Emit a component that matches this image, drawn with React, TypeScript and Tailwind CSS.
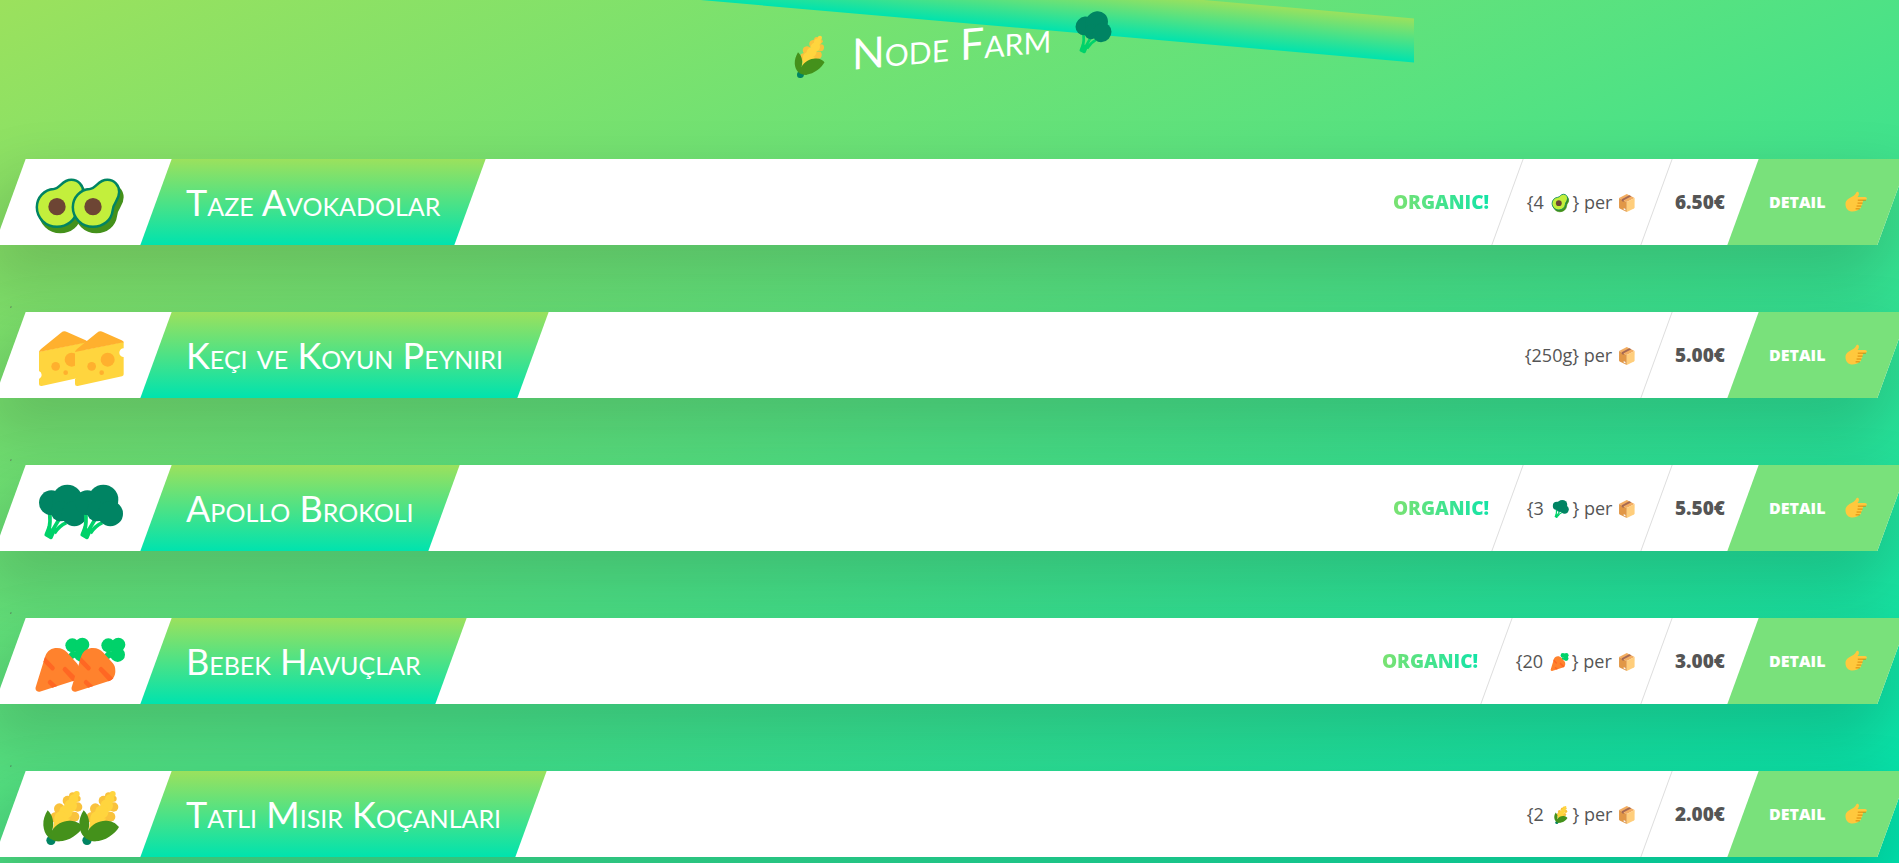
import type { ComponentType, ReactNode } from "react";

type IconProps = { className?: string };

function Drawing({ className, children }: IconProps & { children: ReactNode }) {
  return (
    <svg viewBox="0 0 180 180" className={className} fill="none" aria-hidden="true">
      {children}
    </svg>
  );
}

const AVOCADO =
  "M11.500 94C11.500 64 34 41 62 39C83 37 86 11.500 115 11.500C136 11.500 150.500 28 150.500 48C150.500 74 133 78 131 103C127 133 103 152.500 72 152.500C38 152.500 11.500 126 11.500 94Z";

function Avocado({ className }: IconProps) {
  return (
    <Drawing className={className}>
      <path d={AVOCADO} transform="translate(10 16)" fill="#44911b" stroke="#44911b" strokeWidth="7" />
      <path d={AVOCADO} fill="#c3ef3c" stroke="#008463" strokeWidth="7.500" />
      <circle cx="72" cy="92" r="26" fill="#6d4534" />
    </Drawing>
  );
}

function Cheese({ className }: IconProps) {
  return (
    <Drawing className={className}>
      <path
        d="M18 68L164 38V58A13 13 0 0 0 164 84V136Q164 141 159 142L26 171Q18 172 18 165V150A13 13 0 0 0 18 126Z"
        fill="#ffd53e"
      />
      <path d="M18 69Q19 64 24 60L84 11Q93 4 102 9L158 34Q164 37 164 40Z" fill="#ffb02e" />
      <circle cx="116" cy="92" r="21" fill="#ffb02e" />
      <circle cx="68" cy="112" r="13" fill="#ffb02e" />
      <circle cx="98" cy="131" r="7" fill="#ffb02e" />
    </Drawing>
  );
}

function Broccoli({ className }: IconProps) {
  return (
    <Drawing className={className}>
      <path
        d="M50 92Q53 120 48 142M77 114L58 146M100 122Q78 132 64 154"
        stroke="#00d26a"
        strokeWidth="11"
      />
      <path
        d="M44 132L68 148L59 168Q57 173 51 171L37 163Q32 160 35 155Z"
        fill="#00d26a"
      />
      <g fill="#008463">
        <circle cx="55" cy="62" r="37" />
        <circle cx="103" cy="53" r="45" />
        <circle cx="83" cy="88" r="30" />
        <circle cx="124" cy="95" r="38" />
      </g>
    </Drawing>
  );
}

function Carrot({ className }: IconProps) {
  return (
    <Drawing className={className}>
      <g fill="#00d26a">
        <circle cx="118" cy="31" r="21" />
        <circle cx="148" cy="29" r="21" />
        <circle cx="146" cy="59" r="22" />
        <path d="M118 45L100 66L112 76L140 60Z" />
      </g>
      <path
        d="M8 157L37 63C43 47 56 39 72 39C86 39 94 44 102 52L131 84C137 91 139 97 139 108C139 124 131 135 118 139L20 170C12 172 6 165 8 157Z"
        fill="#ff822d"
      />
      <path
        d="M36 66L64 95Q68 100 63 104Q59 109 54 104L31 81ZM91 98Q96 93 101 98L133 130Q128 136 119 139L91 108Q86 103 91 98ZM46 137Q51 132 56 137L73 153L58 158L46 146Q42 141 46 137Z"
        fill="#ff6723"
      />
    </Drawing>
  );
}

function Corn({ className }: IconProps) {
  return (
    <Drawing className={className}>
      <g fill="#f9c23c">
        <circle cx="119" cy="24" r="11" />
        <circle cx="134" cy="32" r="9" />
        <circle cx="104" cy="38" r="15" />
        <circle cx="134" cy="57" r="14" />
        <circle cx="79" cy="62" r="16" />
        <circle cx="124" cy="86" r="15" />
        <circle cx="68" cy="88" r="16" />
        <circle cx="104" cy="100" r="16" />
      </g>
      <g fill="#ffd53e">
        <circle cx="131" cy="18" r="9" />
        <circle cx="122" cy="33" r="14" />
        <circle cx="113" cy="53" r="19" />
        <circle cx="98" cy="72" r="20" />
        <circle cx="84" cy="90" r="20" />
        <path d="M66 82L112 92L100 105L58 134Z" />
      </g>
      <circle cx="54" cy="157" r="14" fill="#008463" />
      <g fill="#44911b">
        <path d="M44 67C36 80 30 95 31 112C33 140 50 160 80 160L58 127C64 105 60 82 44 67Z" />
        <path d="M57 128C70 105 98 95 118 99C134 101 142 108 150 117C138 138 108 160 78 160C60 160 50 150 50 138Z" />
      </g>
    </Drawing>
  );
}

function Package({ className }: IconProps) {
  return (
    <Drawing className={className}>
      <path d="M90 10L160 44L90 80L20 44Z" fill="#f3ad61" />
      <path d="M20 44L90 80V172L26 140Q20 136 20 130Z" fill="#e19747" />
      <path d="M160 44L90 80V172L154 140Q160 136 160 130Z" fill="#ffce7c" />
      <path d="M112 20L132 30L62 66V82L44 72V56Z" fill="#a56953" />
      <path d="M62 136L78 144V158L62 150Z" fill="#f4f4f4" />
    </Drawing>
  );
}

function PointingHand({ className }: IconProps) {
  return (
    <Drawing className={className}>
      <path
        d="M4 108C4 78 30 60 60 46C76 38 86 24 92 12C98 0 114 6 114 20C114 34 108 44 102 50H164C184 50 184 74 164 74H140C152 78 150 96 138 98C146 104 142 120 130 122C136 130 130 144 118 146C106 162 84 168 62 168C28 168 4 144 4 108Z"
        fill="#ffc83d"
      />
      <path
        d="M108 75H168M106 99H140M98 123H130M90 146H118"
        stroke="#d67d00"
        strokeWidth="7"
        strokeLinecap="round"
      />
    </Drawing>
  );
}

type Product = {
  name: string;
  Icon: ComponentType<IconProps>;
  organic: boolean;
  quantity: string;
  counted: boolean;
  price: string;
};

const products: Product[] = [
  { name: "Taze Avokadolar", Icon: Avocado, organic: true, quantity: "4", counted: true, price: "6.50" },
  { name: "Keçi ve Koyun Peyniri", Icon: Cheese, organic: false, quantity: "250g", counted: false, price: "5.00" },
  { name: "Apollo Brokoli", Icon: Broccoli, organic: true, quantity: "3", counted: true, price: "5.50" },
  { name: "Bebek Havuçlar", Icon: Carrot, organic: true, quantity: "20", counted: true, price: "3.00" },
  { name: "Tatlı Mısır Koçanları", Icon: Corn, organic: false, quantity: "2", counted: true, price: "2.00" },
];

function ProductCard({ product }: { product: Product }) {
  const { name, Icon, organic, quantity, counted, price } = product;
  return (
    <article className="flex h-[86px] skew-x-[-20deg] items-stretch bg-white shadow-[0_30px_60px_10px_rgba(0,0,0,0.15)]">
      <div className="flex w-[146px] shrink-0 items-center">
        <div className="flex skew-x-[20deg] pt-2 pl-[23px]">
          <Icon className="size-[60px]" />
          <Icon className="-ml-6 size-[60px]" />
        </div>
      </div>
      <div className="mr-auto flex items-center bg-linear-to-b/srgb from-[#9be15d] to-[#00e3ae] px-[30px]">
        <h2 className="skew-x-[20deg] font-['Lato'] text-[36px] leading-none font-normal whitespace-nowrap text-white [font-variant-caps:small-caps]">
          {name}
        </h2>
      </div>
      {organic && (
        <div className="flex items-center border-r border-[#ddd] px-[18px]">
          <p className="skew-x-[20deg] bg-linear-to-r/srgb from-[#7be271] to-[#12e4a7] bg-clip-text text-[19px] font-extrabold text-transparent">
            ORGANIC!
          </p>
        </div>
      )}
      <div className="flex items-center border-r border-[#ddd] px-[19px]">
        <p className="flex skew-x-[20deg] items-center text-[18px] whitespace-pre">
          <span>{counted ? `{${quantity} ` : `{${quantity}}`}</span>
          {counted && <Icon className="mx-[2px] size-[20px]" />}
          <span>{counted ? "} per " : " per "}</span>
          <Package className="size-[20px]" />
        </p>
      </div>
      <div className="flex items-center px-[18px]">
        <p className="skew-x-[20deg] text-[19px] font-extrabold">{price}€</p>
      </div>
      <a href="#detail" className="flex w-[150px] items-center justify-center bg-[#79e17b] text-white">
        <span className="flex skew-x-[20deg] items-center gap-5 text-[16px] font-extrabold">
          DETAIL
          <PointingHand className="size-[22px]" />
        </span>
      </a>
    </article>
  );
}

export default function App() {
  return (
    <div className="min-h-screen overflow-hidden bg-linear-to-br/srgb from-[#9be15d] to-[#00e3ae] pb-1.5 font-['Open_Sans',sans-serif] text-[#555]">
      <div className="pr-1.5 pl-2.5">
        <header className="relative flex h-[159px] justify-center">
          <div className="absolute -top-[22px] h-11 w-[924px] skew-y-[5deg] bg-linear-to-b/srgb from-[#9be15d] to-[#00e3ae]" />
          <h1 className="relative flex h-[88px] skew-y-[-5deg] items-center gap-5 font-['Lato'] text-[43px] leading-none font-normal text-white [font-variant-caps:small-caps]">
            <Corn className="size-[45px]" />
            Node Farm
            <Broccoli className="size-[45px]" />
          </h1>
        </header>
        <main>
          {products.map((product, index) => (
            <div key={product.name}>
              {index > 0 && <div className="h-[67px] pt-[54px] text-[8px] leading-[9px]">,</div>}
              <ProductCard product={product} />
            </div>
          ))}
        </main>
      </div>
    </div>
  );
}
